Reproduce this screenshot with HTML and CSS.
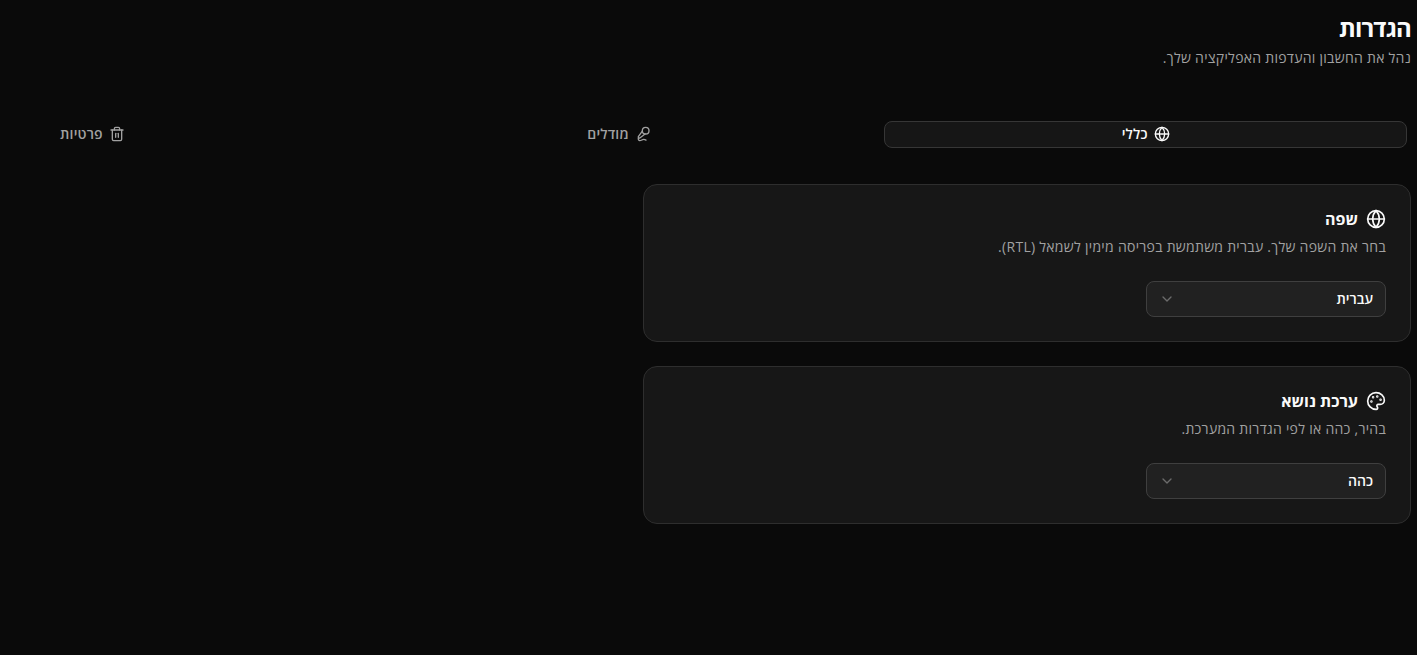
FILE: index.html
```html
<!DOCTYPE html>
<html lang="he" dir="rtl">
<head>
    <meta charset="UTF-8">
    <meta name="viewport" content="width=device-width, initial-scale=1.0">
    <title>הגדרות</title>
    <link rel="stylesheet" href="styles.css">
</head>
<body>
    <main class="settings">
        <header class="page-header">
            <h1>הגדרות</h1>
            <p class="description">נהל את החשבון והעדפות האפליקציה שלך.</p>
        </header>

        <nav class="tabs">
            <button class="tab active">
                <svg class="icon" viewBox="0 0 24 24"><circle cx="12" cy="12" r="10"/><path d="M12 2a14.5 14.5 0 0 0 0 20 14.5 14.5 0 0 0 0-20"/><path d="M2 12h20"/></svg>
                <span>כללי</span>
            </button>
            <button class="tab">
                <svg class="icon" viewBox="0 0 24 24"><path d="m11 7.601-5.994 8.19a1 1 0 0 0 .1 1.298l.817.818a1 1 0 0 0 1.314.087L15.09 12"/><path d="M16.5 21.174C15.5 20.5 14.372 20 13 20c-2.058 0-3.928 2.356-6 2-2.072-.356-2.775-3.369-1.5-4.5"/><circle cx="16" cy="7" r="5"/></svg>
                <span>מודלים</span>
            </button>
            <button class="tab">
                <svg class="icon" viewBox="0 0 24 24"><path d="M3 6h18"/><path d="M19 6v14a2 2 0 0 1-2 2H7a2 2 0 0 1-2-2V6"/><path d="M8 6V4a2 2 0 0 1 2-2h4a2 2 0 0 1 2 2v2"/><path d="M10 11v6"/><path d="M14 11v6"/></svg>
                <span>פרטיות</span>
            </button>
        </nav>

        <section class="card">
            <h2>
                <svg class="icon" viewBox="0 0 24 24"><circle cx="12" cy="12" r="10"/><path d="M12 2a14.5 14.5 0 0 0 0 20 14.5 14.5 0 0 0 0-20"/><path d="M2 12h20"/></svg>
                <span>שפה</span>
            </h2>
            <p class="description">בחר את השפה שלך. עברית משתמשת בפריסה מימין לשמאל (RTL).</p>
            <button class="select">
                <span>עברית</span>
                <svg class="icon" viewBox="0 0 24 24"><path d="m6 9 6 6 6-6"/></svg>
            </button>
        </section>

        <section class="card">
            <h2>
                <svg class="icon" viewBox="0 0 24 24"><path d="M12 22a1 1 0 0 1 0-20 10 9 0 0 1 10 9 5 5 0 0 1-5 5h-2.25a1.75 1.75 0 0 0-1.4 2.8l.3.4a1.75 1.75 0 0 1-1.4 2.8z"/><circle class="dot" cx="13.5" cy="6.5" r=".5"/><circle class="dot" cx="17.5" cy="10.5" r=".5"/><circle class="dot" cx="6.5" cy="12.5" r=".5"/><circle class="dot" cx="8.5" cy="7.5" r=".5"/></svg>
                <span>ערכת נושא</span>
            </h2>
            <p class="description">בהיר, כהה או לפי הגדרות המערכת.</p>
            <button class="select">
                <span>כהה</span>
                <svg class="icon" viewBox="0 0 24 24"><path d="m6 9 6 6 6-6"/></svg>
            </button>
        </section>
    </main>
</body>
</html>
```
FILE: styles.css
```css
:root {
    --background: #0a0a0a;
    --card: #171717;
    --input: #212121;
    --border: #2e2e2e;
    --text: #fafafa;
    --muted: #a1a1a1;
}

* {
    box-sizing: border-box;
}

body {
    margin: 0;
    min-height: 100vh;
    overflow: hidden;
    background-color: var(--background);
    color: var(--text);
    font-family: 'Open Sans', 'Noto Sans', sans-serif;
    font-size: 14px;
    line-height: 20px;
}

h1, h2, p {
    margin: 0;
}

button {
    font: inherit;
    color: inherit;
    cursor: pointer;
}

.settings {
    padding: 12px 6px;
}

.page-header {
    margin-bottom: 49px;
}

h1 {
    font-size: 24px;
    line-height: 32px;
    font-weight: 700;
    letter-spacing: -0.8px;
    margin-bottom: 4px;
}

.description {
    color: var(--muted);
    letter-spacing: 0.28px;
}

.icon {
    width: 16px;
    height: 16px;
    flex-shrink: 0;
    fill: none;
    stroke: currentColor;
    stroke-width: 2;
    stroke-linecap: round;
    stroke-linejoin: round;
}

.icon .dot {
    fill: currentColor;
}

/* The tab strip is wider than the window and runs off its left edge */
.tabs {
    display: flex;
    gap: 4px;
    height: 35px;
    padding: 4px;
    margin-bottom: 32px;
}

.tab {
    display: flex;
    flex: 0 0 522.66px;
    align-items: center;
    justify-content: center;
    gap: 6px;
    padding: 0 8px 2px;
    border: 1px solid transparent;
    border-radius: 8px;
    background: none;
    color: var(--muted);
    font-weight: 600;
    letter-spacing: 0.2px;
}

.tab.active {
    background-color: #161616;
    border-color: #363636;
    color: var(--text);
}

.card {
    width: 768px;
    height: 158px;
    padding: 24px;
    margin-bottom: 24px;
    background-color: var(--card);
    border: 1px solid var(--border);
    border-radius: 14px;
}

h2 {
    display: flex;
    align-items: center;
    gap: 8px;
    height: 20px;
    margin-bottom: 8px;
    font-size: 16px;
    line-height: 20px;
    font-weight: 700;
}

h2 .icon {
    width: 20px;
    height: 20px;
}

.select {
    display: flex;
    align-items: center;
    justify-content: space-between;
    width: 240px;
    height: 36px;
    margin-top: 24px;
    padding: 0 12px;
    background-color: var(--input);
    border: 1px solid #3f3f3f;
    border-radius: 8px;
    font-weight: 600;
}

.select .icon {
    color: #6b6b6b;
}
```
